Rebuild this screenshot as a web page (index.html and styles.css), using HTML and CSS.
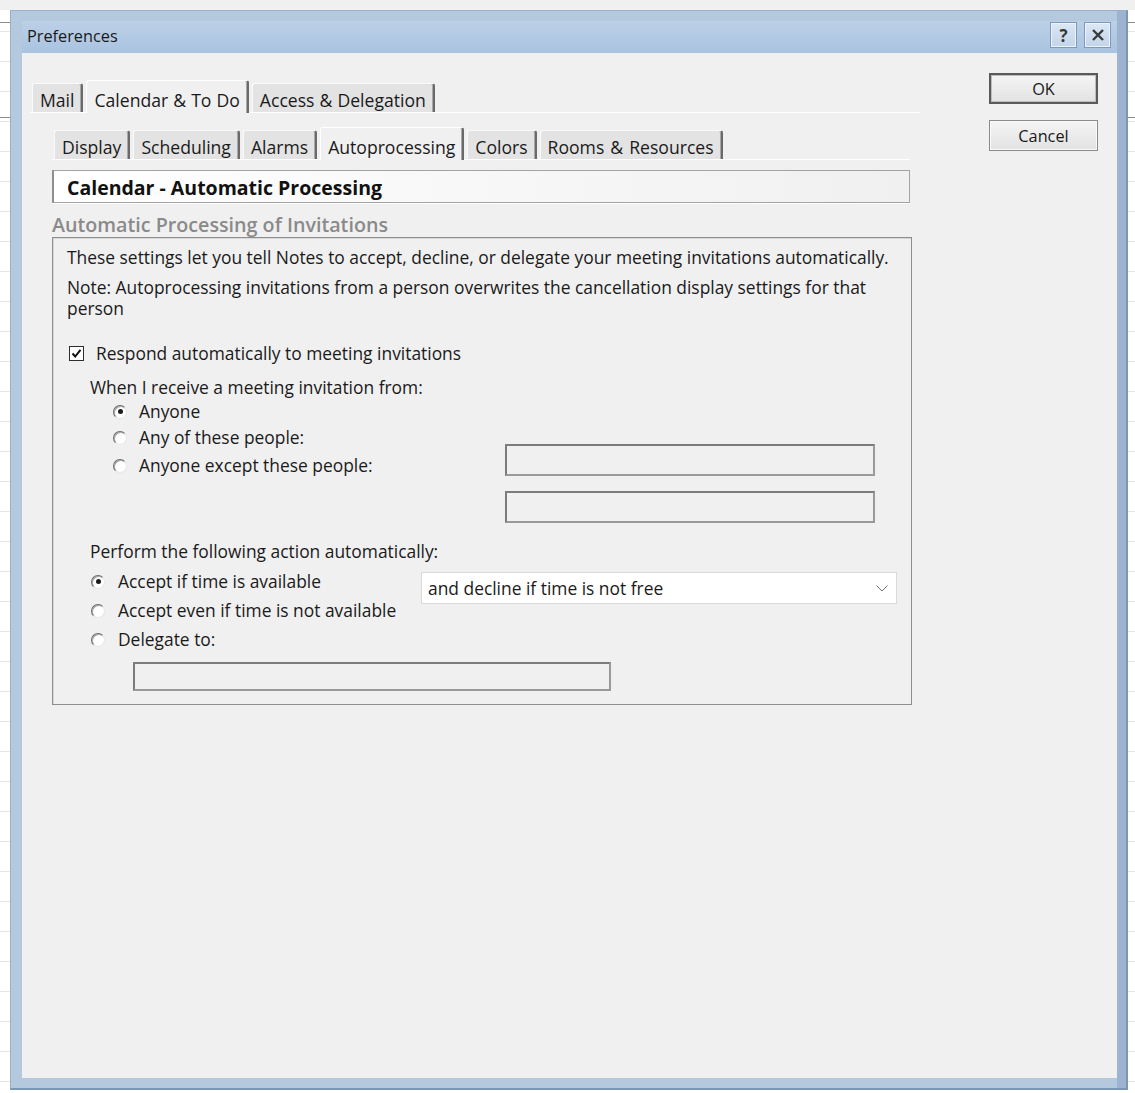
FILE: index.html
```
<!DOCTYPE html>
<html lang="en">
<head>
    <meta charset="UTF-8">
    <title>Preferences</title>
    <link rel="stylesheet" href="styles.css">
</head>
<body>
    <div class="window">
        <div class="titlebar">
            <span class="title">Preferences</span>
            <div class="caption-btns">
                <span class="cap-btn">?</span>
                <span class="cap-btn">
                    <svg width="12" height="12" viewBox="0 0 12 12"><path d="M1 1 L11 11 M11 1 L1 11" stroke="#3a3a3a" stroke-width="2.4"/></svg>
                </span>
            </div>
        </div>

        <div class="client">
            <div class="main">
                <!-- Top level tabs -->
                <div class="tabs top-tabs">
                    <span class="tab">Mail</span>
                    <span class="tab active">Calendar &amp; To Do</span>
                    <span class="tab">Access &amp; Delegation</span>
                </div>

                <div class="page">
                    <div class="tabs sub-tabs">
                        <span class="tab">Display</span>
                        <span class="tab">Scheduling</span>
                        <span class="tab">Alarms</span>
                        <span class="tab active">Autoprocessing</span>
                        <span class="tab">Colors</span>
                        <span class="tab">Rooms &amp; Resources</span>
                    </div>

                    <div class="page-header">Calendar - Automatic Processing</div>
                    <div class="section-label">Automatic Processing of Invitations</div>

                    <div class="group">
                        <p class="intro">These settings let you tell Notes to accept, decline, or delegate your meeting invitations automatically.</p>
                        <p class="note">Note: Autoprocessing invitations from a person overwrites the cancellation display settings for that person</p>

                        <div class="check-row">
                            <span class="checkbox">
                                <svg width="11" height="11" viewBox="0 0 11 11"><path d="M1.5 5.5 L4.2 8.5 L9.5 1.8" fill="none" stroke="#111" stroke-width="2"/></svg>
                            </span>
                            Respond automatically to meeting invitations
                        </div>

                        <!-- Who the rule applies to -->
                        <div class="from">
                            <div class="from-choices">
                                <div class="heading">When I receive a meeting invitation from:</div>
                                <div class="option"><span class="radio on"></span>Anyone</div>
                                <div class="option"><span class="radio"></span>Any of these people:</div>
                                <div class="option"><span class="radio"></span>Anyone except these people:</div>
                            </div>
                            <div class="from-fields">
                                <div class="field"></div>
                                <div class="field"></div>
                            </div>
                        </div>

                        <!-- What to do -->
                        <div class="action">
                            <div class="heading">Perform the following action automatically:</div>
                            <div class="action-grid">
                                <div class="action-choices">
                                    <div class="option"><span class="radio on"></span>Accept if time is available</div>
                                    <div class="option"><span class="radio"></span>Accept even if time is not available</div>
                                    <div class="option"><span class="radio"></span>Delegate to:</div>
                                </div>
                                <div class="select">
                                    <span>and decline if time is not free</span>
                                    <svg width="12" height="7" viewBox="0 0 12 7"><path d="M0.5 0.5 L6 6 L11.5 0.5" fill="none" stroke="#707070" stroke-width="1"/></svg>
                                </div>
                            </div>
                            <div class="field delegate"></div>
                        </div>
                    </div>
                </div>
            </div>

            <div class="side">
                <button class="btn default">OK</button>
                <button class="btn">Cancel</button>
            </div>
        </div>
    </div>
</body>
</html>
```

FILE: styles.css
```
body {
    margin: 0;
    font-family: 'Open Sans', sans-serif;
    color: #1a1a1a;
    background-color: #fff;
    background-image:
        linear-gradient(#f0f0f0, #f0f0f0),
        linear-gradient(#8c8c8c, #8c8c8c),
        linear-gradient(#8c8c8c, #8c8c8c),
        repeating-linear-gradient(to bottom, #fff 0, #fff 1px, #e4e4e4 1px, #e4e4e4 2px, #fff 2px, #fff 30px);
    background-size: 100% 10px, 100% 1px, 100% 1px, 100% 100%;
    background-position: 0 0, 0 22px, 0 117px, 0 0;
    background-repeat: no-repeat;
}
.window {
    box-sizing: border-box;
    width: 1118px;
    height: 1080px;
    margin: 10px 0 0 10px;
    padding: 10px 9px 10px 11px;
    background: #b4c8de;
    border: 1px solid #98b0cc;
    border-right: 2px solid #7b96b6;
    border-bottom: 2px solid #7b96b6;
    box-shadow: inset -9px 0 0 #9cb4d0;
    display: flex;
    flex-direction: column;
}
.titlebar {
    height: 32px;
    display: flex;
    align-items: flex-start;
    justify-content: space-between;
    padding: 0 6px 0 5px;
    background: linear-gradient(to bottom, #bcd0e7, #a9c3e0);
}
.title {
    font-size: 16.3px;
    line-height: 31px;
    color: #1a1a1a;
}
.caption-btns {
    display: flex;
    gap: 7px;
    padding-top: 1px;
}
.cap-btn {
    box-sizing: border-box;
    width: 27px;
    height: 26px;
    display: flex;
    align-items: center;
    justify-content: center;
    background: linear-gradient(to bottom, #dbe7f4, #c3d5ea);
    border: 1px solid #7d98b9;
    box-shadow: inset 0 0 0 1px #eef4fb;
    font-size: 17px;
    font-weight: 700;
    color: #3a3a3a;
}
.client {
    flex: 1;
    display: flex;
    background: #f0f0f0;
}
.main {
    flex: 1;
    padding: 27px 0 0 8px;
}
.side {
    width: 109px;
    padding: 20px 19px 0 0;
    display: flex;
    flex-direction: column;
    gap: 16px;
}
.btn {
    height: 31px;
    font-family: 'Open Sans', sans-serif;
    font-size: 16.3px;
    color: #1a1a1a;
    background: linear-gradient(to bottom, #f5f5f5, #e2e2e2);
    border: 1px solid #8a8a8a;
    box-shadow: inset 0 0 0 1px #fbfbfb;
    padding: 0;
}
.btn.default {
    border: 2px solid #5a5a5a;
    box-shadow: inset 0 0 0 1px #bdbdbd;
}

/* tabs */
.tabs {
    box-sizing: border-box;
    display: flex;
    align-items: flex-end;
    gap: 3px;
    padding-left: 2px;
    border-bottom: 1px solid #fff;
    font-size: 17.6px;
    word-spacing: 1.5px;
}
.top-tabs {
    width: 890px;
    word-spacing: 0.5px;
}
.sub-tabs {
    width: 858px;
}
.tab {
    line-height: 22px;
    padding: 5px 7px 1px 7px;
    background: #e3e3e3;
    border-top: 1px solid #fafafa;
    border-left: 1px solid #fafafa;
    border-right: 2px solid #6a6a6a;
    box-shadow: inset -1px 0 0 #a8a8a8;
    border-radius: 3px 3px 0 0;
    white-space: nowrap;
}
.tab.active {
    background: #f0f0f0;
    padding-top: 8px;
    padding-bottom: 2px;
    margin-bottom: -1px;
    border-left-color: #fff;
    border-top-color: #fff;
}
.page {
    margin-left: 22px;
    padding-top: 14px;
}
.page-header {
    box-sizing: border-box;
    width: 858px;
    height: 33px;
    margin-top: 10px;
    padding: 2px 0 0 13px;
    line-height: 29px;
    font-size: 19.5px;
    font-weight: 700;
    color: #111;
    background: linear-gradient(to right, #fff, #f0f0f0);
    border: 1px solid #a3a3a3;
    border-left: 2px solid #8f8f8f;
    box-shadow: 0 1px 0 #fff;
}
.section-label {
    margin-top: 10px;
    line-height: 24px;
    font-size: 19.7px;
    font-weight: 600;
    color: #8a8a8a;
}

/* group box */
.group {
    width: 830px;
    padding: 9px 14px 13px 14px;
    border: 1px solid #8e8e8e;
    box-shadow: inset 1px 1px 0 #d8d8d8;
    font-size: 17.4px;
    line-height: 21px;
}
.group p {
    margin: 0;
}
.intro {
    white-space: nowrap;
}
.group .note {
    margin-top: 9px;
    max-width: 820px;
}
.check-row {
    display: flex;
    align-items: center;
    gap: 12px;
    margin: 24px 0 0 2px;
}
.checkbox {
    box-sizing: border-box;
    width: 15px;
    height: 15px;
    display: flex;
    align-items: center;
    justify-content: center;
    background: #fff;
    border: 1px solid #2e2e2e;
}
.from {
    display: grid;
    grid-template-columns: 415px 370px;
    margin: 13px 0 0 23px;
}
.option {
    display: flex;
    align-items: center;
    gap: 12px;
}
.from-choices .option {
    margin: 7px 0 0 23px;
}
.from-choices .heading + .option {
    margin-top: 3px;
}
.from-choices .heading + .option + .option {
    margin-top: 5px;
}
.from-fields {
    padding-top: 67px;
    display: flex;
    flex-direction: column;
    gap: 15px;
}
.field {
    box-sizing: border-box;
    height: 32px;
    border: 2px solid;
    border-color: #7c7c7c #9a9a9a #9a9a9a #7c7c7c;
    background: #f0f0f0;
}
.radio {
    box-sizing: border-box;
    width: 14px;
    height: 14px;
    border-radius: 50%;
    border: 1px solid;
    border-color: #6a6a6a #e6e6e6 #e6e6e6 #6a6a6a;
    background: #fff;
    box-shadow: inset 1px 1px 0 #a8a8a8;
    display: flex;
    align-items: center;
    justify-content: center;
    flex-shrink: 0;
}
.radio.on::after {
    content: "";
    width: 5px;
    height: 5px;
    border-radius: 50%;
    background: #1a1a1a;
}
.action {
    margin: 18px 0 0 23px;
}
.action-grid {
    display: grid;
    grid-template-columns: 331px 476px;
    margin-top: 9px;
}
.action-choices .option {
    margin: 8px 0 0 1px;
    gap: 13px;
}
.action-choices .option:first-child {
    margin-top: 0;
}
.select {
    box-sizing: border-box;
    height: 32px;
    margin-top: 1px;
    display: flex;
    align-items: center;
    justify-content: space-between;
    padding: 0 8px 0 6px;
    background: #fff;
    border: 1px solid #dadada;
}
.delegate {
    width: 478px;
    height: 29px;
    margin: 12px 0 0 43px;
}
```
